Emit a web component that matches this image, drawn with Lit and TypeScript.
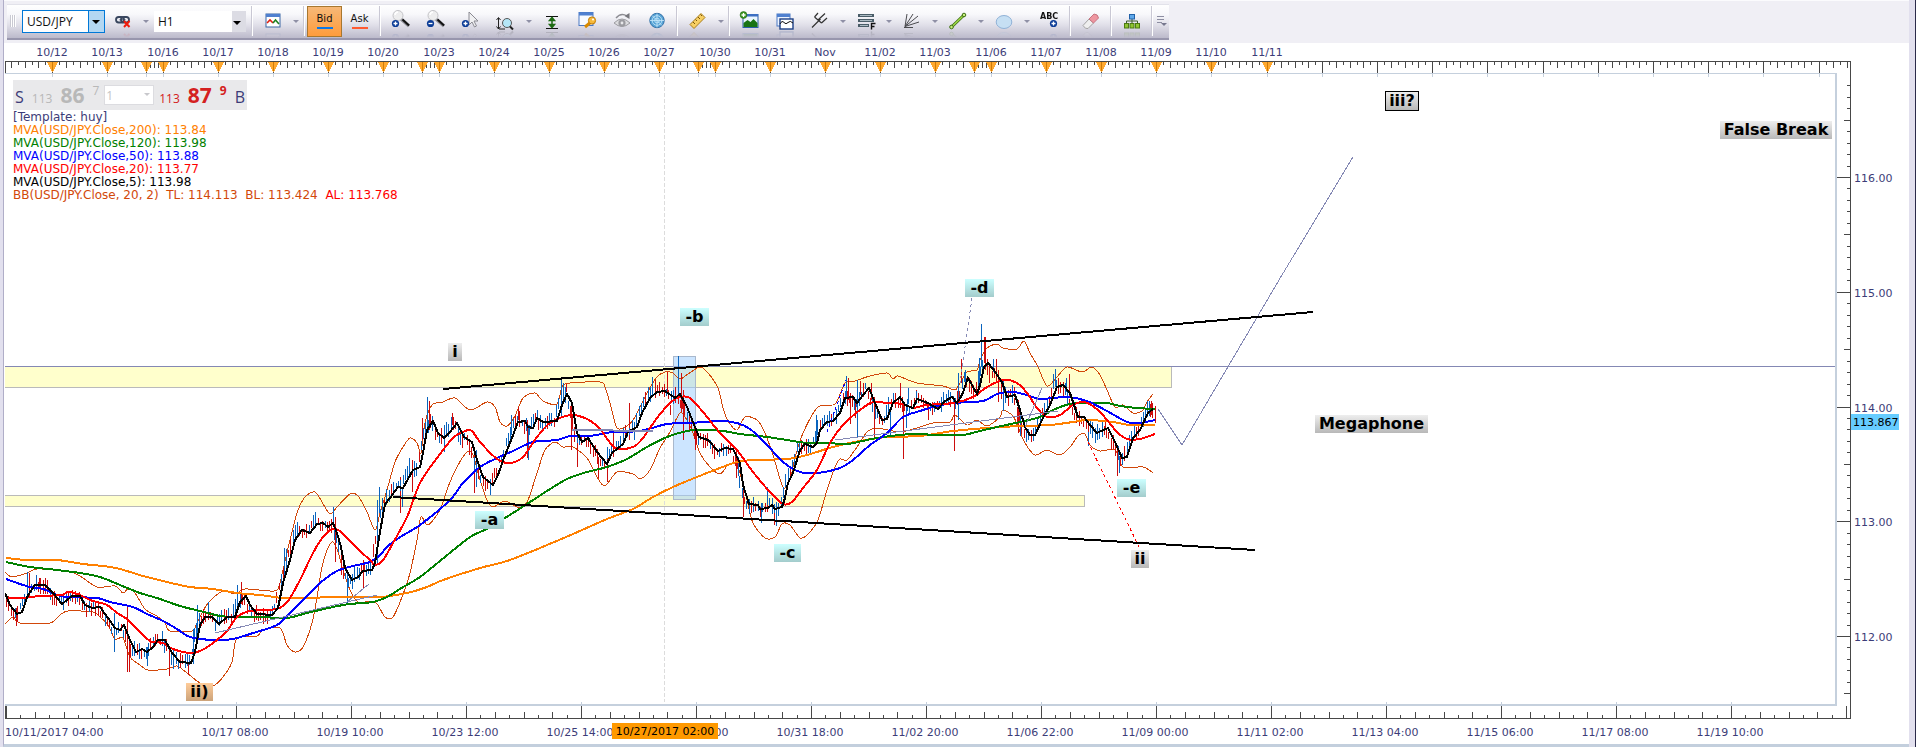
import { LitElement, html, svg, css } from "lit";
import { customElement, property } from "lit/decorators.js";
import { classMap } from "lit/directives/class-map.js";

/* ---------- series data: flat x, y pairs in chart space ---------- */

const MVA200 = [6,558,27,560,57,560,83,564,103,566,120,569,143,576,167,582,190,587,213,589,237,593,260,595,283,598,310,598,333,597,380,597,407,593,427,587,443,580,480,568,507,561,540,548,573,534,607,519,633,509,653,497,673,487,697,477,720,468,737,462,753,460,787,459,807,455,833,447,860,441,887,437,920,436,953,431,987,428,1020,426,1050,425,1073,422,1087,420,1113,422,1130,425,1155,425];
const MVA120 = [6,562,30,567,57,570,80,573,100,577,120,585,140,593,160,599,180,606,200,611,220,616,237,617,260,617,287,618,307,613,333,607,350,604,373,602,387,597,400,589,420,577,440,561,470,537,487,529,505,518,527,504,547,491,567,479,587,472,607,467,627,459,647,447,667,437,687,431,700,430,723,431,740,434,767,437,787,440,807,443,827,443,847,444,867,440,883,437,913,434,937,435,963,435,980,431,997,427,1020,422,1040,417,1053,410,1070,404,1087,403,1107,403,1120,406,1137,408,1155,409];
const MVA50 = [6,579,20,584,30,587,43,589,57,595,67,597,97,598,110,602,133,607,147,614,163,621,177,629,190,637,213,640,233,639,250,634,277,625,290,613,307,596,320,583,337,571,353,566,370,562,380,555,388,546,400,537,420,525,450,500,463,483,480,467,497,458,513,451,533,442,557,440,570,436,590,436,613,432,640,431,667,424,690,423,720,421,737,423,750,429,767,445,783,462,800,472,817,473,840,468,853,460,870,445,887,433,903,417,920,411,937,406,953,403,983,401,997,394,1013,392,1027,395,1040,399,1067,397,1087,401,1107,411,1127,422,1140,423,1155,420];
const MVA20 = [6,598,23,598,40,596,62,595,68,592,80,595,90,600,107,605,117,613,127,619,137,629,150,641,163,643,173,649,190,653,200,651,213,643,227,631,237,617,250,611,277,609,288,601,300,580,313,553,323,537,333,529,340,531,347,538,360,551,370,560,375,565,383,560,393,543,407,517,420,483,437,458,453,438,465,431,472,431,480,442,497,459,510,463,523,457,537,437,550,423,570,415,587,419,600,429,615,448,633,447,643,438,657,418,670,403,680,397,690,398,703,412,720,433,737,450,753,472,770,492,783,504,792,502,803,488,817,470,830,443,843,425,860,410,873,402,887,403,903,404,913,408,927,405,953,403,973,397,987,387,1003,380,1017,383,1027,393,1037,408,1047,417,1060,415,1073,405,1085,402,1100,412,1117,432,1127,439,1140,439,1155,434];
const MVA5 = [5,593,10,605,17,614,22,612,28,595,35,585,45,585,53,593,62,604,72,596,80,596,85,605,92,608,100,607,108,618,115,628,120,630,124,625,130,640,136,652,142,649,147,652,153,647,158,640,165,640,172,653,180,662,191,663,195,652,200,625,205,617,212,617,219,624,227,617,235,617,240,602,246,596,250,605,257,614,272,615,278,608,283,583,290,560,295,540,302,530,310,533,317,524,323,523,328,527,333,523,337,533,341,547,345,568,352,580,358,577,363,571,372,570,375,563,380,532,385,504,390,498,398,487,403,488,413,470,420,467,423,453,427,430,433,421,438,433,444,438,450,432,457,423,464,437,472,442,477,460,483,477,493,485,498,475,505,455,512,438,518,422,525,421,528,427,533,428,537,418,543,422,557,421,562,405,567,394,572,403,577,433,582,442,588,438,597,452,607,464,612,453,623,444,628,432,637,427,642,413,650,398,657,392,665,391,675,398,680,394,687,407,693,422,699,437,708,440,718,451,725,448,733,449,740,463,743,485,749,504,758,505,760,509,768,508,772,505,775,509,782,507,785,498,788,483,793,473,800,450,805,444,813,447,817,443,820,430,827,422,833,421,840,413,845,398,853,397,857,403,863,395,869,388,873,398,882,420,887,419,893,403,900,397,905,405,913,408,917,399,928,403,938,409,945,401,952,397,957,403,962,395,968,378,977,394,980,385,984,367,988,363,993,369,1002,382,1007,397,1015,395,1020,410,1025,427,1030,435,1035,435,1043,418,1050,405,1057,387,1063,385,1070,393,1078,417,1084,417,1090,425,1097,433,1108,428,1115,442,1122,458,1127,457,1133,438,1140,430,1148,413,1153,409];
const BAND_TOP = [5,572,12,577,27,573,37,569,67,571,80,576,97,587,115,586,123,593,128,589,135,593,145,609,157,616,165,623,170,631,192,631,197,623,208,603,223,591,235,594,245,589,270,591,278,589,283,570,290,540,297,513,305,497,315,492,322,502,330,514,337,507,350,494,358,496,367,512,375,530,380,513,387,490,395,462,403,447,410,438,417,443,421,453,425,423,432,405,443,402,455,398,470,410,487,402,495,407,500,422,507,426,515,416,523,398,535,393,543,401,557,404,562,387,570,383,600,382,605,387,610,403,617,428,627,426,635,417,647,393,657,377,665,372,673,373,680,379,688,374,700,367,708,373,718,388,723,408,728,421,737,430,745,417,757,420,765,433,773,455,783,487,790,480,795,458,803,433,818,407,835,404,845,383,855,381,870,376,887,373,893,379,898,376,917,383,943,386,955,390,960,383,967,372,977,370,980,360,987,348,997,344,1003,348,1017,349,1024,341,1030,353,1038,367,1047,386,1057,377,1067,367,1082,372,1092,367,1100,375,1107,390,1115,407,1123,405,1133,413,1142,411,1147,402,1153,394];
const BAND_LOW = [5,624,13,617,20,623,50,623,60,615,68,611,93,612,100,617,108,625,115,639,123,638,130,657,140,665,148,670,167,669,177,666,187,673,200,683,213,686,223,677,232,662,237,638,257,636,263,630,280,628,287,645,295,652,303,647,312,623,317,597,322,567,328,548,333,542,338,552,343,570,350,590,358,602,375,602,385,617,393,617,402,597,410,573,417,540,421,517,428,525,440,510,448,487,457,467,467,452,473,455,480,480,487,500,493,507,505,501,520,508,528,500,537,473,545,450,555,442,563,447,573,447,587,458,597,477,605,486,617,472,633,474,640,479,650,470,660,448,670,432,680,413,687,420,693,433,700,453,710,467,720,474,728,465,736,463,740,473,747,500,753,523,765,538,775,537,782,524,790,525,800,538,808,534,818,520,827,490,835,467,840,459,847,460,857,447,867,432,877,428,900,432,920,427,933,423,950,422,955,415,967,425,977,420,987,426,1000,417,1003,410,1013,416,1018,427,1025,443,1035,455,1047,450,1060,455,1070,447,1078,436,1085,434,1090,445,1100,451,1115,450,1123,467,1143,467,1153,473];

/* long candles: x, high, low, rising (1) or falling (0) */
const LONG_BARS = [
  [16,608,626,0],[27,572,592,1],[29,573,590,0],[36,577,590,1],[39,578,588,0],[127,607,672,0],[129,640,672,0],[114,613,652,1],[147,647,666,1],[169,647,676,0],[173,650,669,1],[188,663,675,0],[193,629,664,1],[197,605,640,1],[208,602,614,1],[241,582,604,0],[237,585,607,1],[284,548,580,1],[286,549,570,1],[315,512,527,1],[333,507,523,1],[335,517,562,0],[341,546,575,0],[347,570,603,1],[363,560,588,0],[377,500,563,1],[379,487,513,1],[400,477,513,0],[402,487,507,1],[409,458,476,1],[412,463,492,0],[427,397,430,1],[429,401,430,0],[422,418,440,0],[452,413,425,0],[444,425,452,1],[474,450,493,0],[476,450,487,1],[511,415,435,1],[518,407,420,0],[527,420,458,0],[528,425,460,1],[537,410,420,1],[561,380,417,1],[563,383,400,1],[566,384,392,0],[571,403,450,0],[577,440,467,0],[598,457,478,0],[607,457,482,0],[613,431,452,0],[629,403,440,0],[634,422,440,1],[652,377,397,1],[655,380,392,0],[667,372,393,0],[670,405,415,0],[678,356,397,1],[681,373,412,0],[683,390,440,0],[695,430,450,0],[736,450,478,0],[743,483,517,0],[738,457,476,1],[767,487,505,1],[761,503,523,1],[776,503,526,1],[774,508,525,0],[816,415,443,1],[846,376,397,1],[848,378,400,0],[850,393,424,0],[855,402,418,0],[857,380,437,1],[860,381,395,0],[871,383,400,0],[874,397,438,0],[890,410,435,1],[900,383,397,0],[903,403,459,0],[906,406,428,1],[908,388,404,1],[916,390,402,0],[928,405,420,0],[943,392,404,1],[950,392,400,1],[954,402,451,0],[958,373,420,1],[961,359,383,0],[965,370,384,1],[981,324,367,1],[984,337,363,0],[985,337,363,0],[979,358,386,1],[989,366,383,0],[993,359,372,1],[996,359,378,0],[998,370,402,0],[1003,380,411,1],[1012,385,395,1],[1014,387,397,0],[1018,400,433,0],[1020,410,436,1],[1053,374,388,1],[1055,369,387,1],[1069,374,397,0],[1066,378,392,1],[1088,432,446,1],[1117,450,476,0],[1119,456,473,1],[1105,419,430,0],[1149,401,416,1],[1151,401,415,0],[1155,406,423,0],
];

const MAJOR_LINES = [
  { pts: MVA200, cls: "ma orange" },
  { pts: MVA120, cls: "ma green" },
  { pts: MVA50, cls: "ma blue" },
  { pts: MVA20, cls: "ma red" },
  { pts: MVA5, cls: "ma black" },
];

const toPoints = (a: number[]) => {
  let s = "";
  for (let i = 0; i < a.length; i += 2) s += `${a[i]},${a[i + 1]} `;
  return s;
};

/* Catmull-Rom smoothing so sampled curves bend between their points */
const toPath = (a: number[]) => {
  const n = a.length / 2;
  const X = (i: number) => a[2 * Math.max(0, Math.min(n - 1, i))];
  const Y = (i: number) => a[2 * Math.max(0, Math.min(n - 1, i)) + 1];
  let d = `M${X(0)} ${Y(0)}`;
  for (let i = 0; i < n - 1; i++) {
    const c1x = X(i) + (X(i + 1) - X(i - 1)) / 7;
    const c1y = Y(i) + (Y(i + 1) - Y(i - 1)) / 7;
    const c2x = X(i + 1) - (X(i + 2) - X(i)) / 7;
    const c2y = Y(i + 1) - (Y(i + 2) - Y(i)) / 7;
    d += `C${c1x.toFixed(1)} ${c1y.toFixed(1)} ${c2x.toFixed(1)} ${c2y.toFixed(1)} ${X(i + 1)} ${Y(i + 1)}`;
  }
  return d;
};

const valueAt = (a: number[], x: number) => {
  for (let i = 2; i < a.length; i += 2) {
    if (x <= a[i]) {
      const t = (x - a[i - 2]) / (a[i] - a[i - 2]);
      return a[i - 1] + t * (a[i + 1] - a[i - 1]);
    }
  }
  return a[a.length - 1];
};

/* hourly bars around the fast average, as one path per direction */
const buildBars = () => {
  let seed = 7919;
  const rnd = () => (seed = (seed * 16807) % 2147483647) / 2147483647;
  const paths = ["", ""];
  for (let k = 0; k < 501; k++) {
    const x = Math.round(6 + k * 2.292) + 0.5;
    const now = valueAt(MVA5, x + 3);
    const next = valueAt(MVA5, x + 6);
    const mid = now + (rnd() - 0.5) * 7;
    const up = next < now - 0.8 ? rnd() < 0.8 : next > now + 0.8 ? rnd() < 0.2 : rnd() < 0.5;
    const half = 3 + rnd() * 5;
    paths[up ? 1 : 0] += `M${x} ${Math.round(mid - half)}V${Math.round(mid + half)}`;
  }
  for (const [x, hi, lo, up] of LONG_BARS) paths[up] += `M${x + 0.5} ${hi}V${lo}`;
  return paths;
};
const [FALLING, RISING] = buildBars();

/* ---------- axes ---------- */

const DAYS: [string, number][] = [
  ["10/12", 52], ["10/13", 107], ["10/16", 163], ["10/17", 218], ["10/18", 273], ["10/19", 328], ["10/20", 383],
  ["10/23", 439], ["10/24", 494], ["10/25", 549], ["10/26", 604], ["10/27", 659], ["10/30", 715], ["10/31", 770],
  ["Nov", 825], ["11/02", 880], ["11/03", 935], ["11/06", 991], ["11/07", 1046], ["11/08", 1101], ["11/09", 1156],
  ["11/10", 1211], ["11/11", 1267],
];
const WEEK_OPENS = [146, 422, 698, 974];
const FUTURE_DAYS = [1322, 1377, 1432, 1487, 1543, 1598, 1653, 1708, 1763, 1819];

const dayTicks = () => {
  const stops = [-3, ...DAYS.map((d) => d[1]), ...FUTURE_DAYS, 1874];
  let d = "";
  for (let i = 0; i < stops.length - 1; i++) {
    const weekOpen = WEEK_OPENS.find((w) => w > stops[i] && w < stops[i + 1]);
    const end = weekOpen ?? stops[i + 1];
    for (let k = 1; k < 8; k++) {
      const x = Math.round(stops[i] + k * 6.9);
      if (x < 8 || x > end - 3 || x > 1848) continue;
      d += `M${x + 0.5} 62V${k % 2 ? 65 : 68}`;
    }
    if (weekOpen) for (let k = 1; k < 4; k++) d += `M${weekOpen + k * 4 + 0.5} 62V68`;
  }
  for (const x of FUTURE_DAYS) d += `M${x + 0.5} 62V74`;
  for (const x of [...WEEK_OPENS, ...DAYS.map((q) => q[1])]) d += `M${x + 0.5} 71V74`;
  return d;
};

const TIMES = ["10/17 08:00", "10/19 10:00", "10/23 12:00", "10/25 14:00", "10/27 16:00", "10/31 18:00", "11/02 20:00", "11/06 22:00", "11/09 00:00", "11/11 02:00", "11/13 04:00", "11/15 06:00", "11/17 08:00", "11/19 10:00"];

const timeTicks = () => {
  let d = "";
  for (let i = 1; i <= 128; i++) {
    const x = Math.round(6 + i * 14.375) + 0.5;
    d += `M${x} 718V${i % 8 === 0 ? 706 : i % 2 ? 715 : 712}`;
  }
  return d;
};

const priceTicks = () => {
  let d = "";
  for (let k = -8; k <= 45; k++) {
    const y = Math.round(177 + k * 11.475) + 0.5;
    d += `M1851 ${y}H${k % 10 === 0 ? 1837 : k % 5 === 0 ? 1844 : 1847}`;
  }
  return d;
};

/* ---------- notes on the canvas ---------- */

interface Note { text: string; x: number; y: number; w: number; tone: string; }
const NOTES: Note[] = [
  { text: "iii?", x: 1385, y: 91, w: 34, tone: "grey boxed" },
  { text: "False Break", x: 1720, y: 121, w: 112, tone: "grey" },
  { text: "Megaphone", x: 1315, y: 415, w: 113, tone: "grey" },
  { text: "i", x: 448, y: 343, w: 14, tone: "grey" },
  { text: "ii", x: 1131, y: 550, w: 18, tone: "grey" },
  { text: "ii)", x: 186, y: 683, w: 27, tone: "tan" },
  { text: "-a", x: 475, y: 511, w: 29, tone: "aqua" },
  { text: "-b", x: 680, y: 308, w: 29, tone: "aqua" },
  { text: "-c", x: 774, y: 544, w: 27, tone: "aqua" },
  { text: "-d", x: 965, y: 279, w: 29, tone: "aqua" },
  { text: "-e", x: 1117, y: 479, w: 29, tone: "aqua" },
];

const LEGEND = [
  ["", "[Template: huy]"],
  ["orange", "MVA(USD/JPY.Close,200): 113.84"],
  ["green", "MVA(USD/JPY.Close,120): 113.98"],
  ["blue", "MVA(USD/JPY.Close,50): 113.88"],
  ["red", "MVA(USD/JPY.Close,20): 113.77"],
  ["black", "MVA(USD/JPY.Close,5): 113.98"],
];

/* ---------- toolbar icons, 24 x 24 ---------- */

const plusBall = svg`<circle cx="6.500" cy="14.500" r="3.600" fill="#0b3c96"/><path d="M4.500 14.500h4M6.500 12.500v4" stroke="#fff" stroke-width="1.300"/>`;
const magnifier = svg`<path d="M12 10l8 7" stroke="#8f8f98" stroke-width="3.500"/><path d="M13.500 10.500l6.500 6" stroke="#111" stroke-width="2"/><circle cx="9" cy="6.500" r="5" fill="#ededee" stroke="#c2c2c6"/><path d="M6 6a3.200 3.200 0 0 1 3-3" stroke="#fff" stroke-width="1.500" fill="none"/>`;

const ICONS: Record<string, unknown> = {
  link: svg`<g fill="none" stroke="#39465e" stroke-width="1.800"><rect x="5" y="8" width="8" height="5.500" rx="2.700"/><rect x="10" y="8" width="8" height="5.500" rx="2.700"/></g><path d="M8.500 10.800h6" stroke="#39465e"/><path d="M13 12l5.500 6M18.500 12L13 18" stroke="#f01c0c" stroke-width="2"/>`,
  study: svg`<rect x="5" y="5" width="14" height="13" fill="#fff" stroke="#3b66a4"/><rect x="5" y="5" width="14" height="3" fill="#4f80d0"/><path d="M6 14l3-3 3 3" stroke="#e02010" stroke-width="1.600" fill="none"/><path d="M12 14l2.500-3 3.500 4" stroke="#208020" stroke-width="1.600" fill="none"/>`,
  zoomin: svg`${magnifier}${plusBall}`,
  zoomout: svg`${magnifier}<circle cx="6.500" cy="14.500" r="3.600" fill="#0b3c96"/><path d="M4.500 14.500h4" stroke="#fff" stroke-width="1.300"/>`,
  pointer: svg`<path d="M10 3v13l3-3 2.500 5 2-1-2.500-5h4z" fill="#f0f0f2" stroke="#8a8a92"/>${plusBall}`,
  measure: svg`<path d="M4.500 9v11M2.500 11l2-2.500 2 2.500M2.500 17.500l2 2.500 2-2.500M5 20h6" stroke="#222" fill="none"/><circle cx="13" cy="14" r="4.500" fill="#b5e6f7" stroke="#555"/><path d="M16 17.500l3 3" stroke="#222" stroke-width="2"/>`,
  fit: svg`<path d="M6 7.500h12M6 19.500h12" stroke="#111"/><path d="M12 8v11M9.500 11.500L12 8.500l2.500 3zM9.500 15.500L12 18.500l2.500-3z" stroke="#1d6a12" fill="#4bb52f" stroke-width="1.500"/>`,
  key: svg`<rect x="4" y="3.500" width="14" height="13" fill="#f7faff" stroke="#4a78c4"/><rect x="4" y="3.500" width="14" height="3" fill="#4f80d0"/><path d="M10 18l6-5" stroke="#d98a00" stroke-width="3"/><circle cx="17" cy="11.500" r="3.600" fill="#f6b93a" stroke="#c27c05"/><circle cx="18" cy="10.500" r="1" fill="#fff"/>`,
  eye: svg`<path d="M4 14q8-8 16 0q-8 7-16 0z" fill="#dcdcdf" stroke="#9b9ba0"/><circle cx="12" cy="14" r="3.600" fill="#9b9ba0"/><circle cx="12" cy="14" r="1.400" fill="#e8e8ea"/><path d="M6 9q5-6 11-2" stroke="#8d8d93" fill="none" stroke-width="1.400"/><path d="M19.500 4v6l-5-3z" fill="#77777d"/>`,
  globe: svg`<circle cx="12" cy="11.500" r="7.200" fill="#58a4d6" stroke="#2f6ea6"/><g fill="none" stroke="#c8e8fa" stroke-width=".8"><circle cx="12" cy="11.500" r="2.400"/><circle cx="12" cy="11.500" r="4.800"/><path d="M12 4.500v14M5 11.500h14M7 6.500l10 10"/></g>`,
  ruler: svg`<path d="M4 15.500L15 4.500l4 4L8 19.500z" fill="#f7cf63" stroke="#a77b18"/><path d="M7 13l2 2M9.500 10.500l1.500 1.500M12 8l2 2M14.500 5.500l1.500 1.500" stroke="#7a5608"/>`,
  picture: svg`<rect x="5" y="5.500" width="15" height="13" fill="#eaf5ff" stroke="#2b5fa8"/><path d="M5.500 18v-4l4-3 3 2 3-3 4 4v4z" fill="#197414"/><rect x="5" y="5" width="15" height="2.500" fill="#3d6fc2"/><circle cx="5.500" cy="6" r="3.400" fill="#3f9a25" stroke="#1d6110" stroke-width=".6"/><path d="M3.500 6h4M5.500 4v4" stroke="#fff" stroke-width="1.300"/>`,
  windows: svg`<rect x="4" y="5" width="13" height="12" fill="#eef4ff" stroke="#4a78c4"/><rect x="4" y="5" width="13" height="3" fill="#4f80d0"/><rect x="7" y="10" width="13" height="10" fill="#fff" stroke="#1c3f86" stroke-width="1.400"/><path d="M7 15q2-4 4-1.500t4 0 5 .5" stroke="#111" fill="none"/>`,
  fork: svg`<path d="M4 18.500L12.500 10M6.500 8l7 6M6.500 8L10 4M10 11L17 4.500M13.500 14L19 9" stroke="#333" fill="none" stroke-width="1.200"/>`,
  levels: svg`<g stroke="#4a5d68" stroke-width="3"><path d="M4 6.500h16M4 11.500h16M4 16.500h11"/></g><path d="M6 6.500h12M6 11.500h12M6 16.500h8" stroke="#b6c4cc" stroke-width=".9"/><path d="M17.500 20.500v-6h4M17.500 17.500h3" stroke="#111" stroke-width="1.400" fill="none"/>`,
  fan: svg`<path d="M5 17.500L7 5M5 17.500L13 5M5 17.500L18 7M5 17.500L19 13M4 18.500h9" stroke="#4a4a4e" fill="none"/>`,
  trend: svg`<path d="M5.500 18L18 6" stroke="#3c6e12" stroke-width="3"/><path d="M5.500 18L18 6" stroke="#a3dd4a" stroke-width="1.400"/><circle cx="5.500" cy="18" r="1.800" fill="#c9ef7e" stroke="#3c6e12"/><circle cx="18" cy="6" r="1.800" fill="#c9ef7e" stroke="#3c6e12"/>`,
  oval: svg`<ellipse cx="12" cy="13" rx="7.800" ry="6.500" fill="#c6dff3" stroke="#8fb1d6"/>`,
  label: svg`<circle cx="15.500" cy="14.500" r="3.600" fill="#0b3c96"/><path d="M13.500 14.500h4M15.500 12.500v4" stroke="#fff" stroke-width="1.300"/><text x="2" y="10" font-family="DejaVu Sans" font-size="8" font-weight="bold" fill="#111">ABC</text>`,
  eraser: svg`<path d="M4 16.500L10 10l4.500 4L9 19.500q-2.500 1-5-3z" fill="#efefef" stroke="#a2a2a2"/><path d="M10 10l5-5q4 0 4.500 4l-5 5z" fill="#ee96a0" stroke="#c67480"/>`,
  tree: svg`<path d="M12 9v3M6.500 15v-3h11v3M12 12v3" stroke="#3f5c2c" fill="none"/><rect x="9.500" y="5.500" width="5" height="4.500" fill="#5fa8ea" stroke="#2262a8"/><g fill="#8fc531" stroke="#4c7a10"><rect x="4.500" y="14.500" width="4" height="4.500"/><rect x="10" y="14.500" width="4" height="4.500"/><rect x="15.500" y="14.500" width="4" height="4.500"/></g>`,
};

type Item = [kind: string, name?: string, title?: string];
const TOOLS: Item[] = [
  ["icon", "zoomin", "Zoom in"], ["icon", "zoomout", "Zoom out"], ["icon", "pointer", "Pointer"], ["icon", "measure", "Measure"], ["caret"],
  ["icon", "fit", "Fit vertically"], ["icon", "key", "Properties"], ["icon", "eye", "Show or hide"], ["icon", "globe", "Radar"], ["sep"],
  ["icon", "ruler", "Ruler"], ["caret"], ["sep"],
  ["icon", "picture", "Add picture"], ["icon", "windows", "Arrange windows"], ["icon", "fork", "Pitchfork"], ["caret"],
  ["icon", "levels", "Fibonacci levels"], ["caret"], ["icon", "fan", "Fan"], ["caret"], ["icon", "trend", "Trend line"], ["caret"],
  ["icon", "oval", "Ellipse"], ["caret"], ["icon", "label", "Text label"], ["sep"],
  ["icon", "eraser", "Erase"], ["sep"], ["icon", "tree", "Object tree"], ["sep"],
];

@customElement("chart-toolbar")
class ChartToolbar extends LitElement {
  static styles = css`
    :host { display: block; background: #f0eff5; border-top: 1px solid #fbfbfd; padding: 3px 0 3px 3px; font-family: "Open Sans", sans-serif; font-size: 12px; }
    .bar { display: flex; align-items: center; width: max-content; height: 36px; box-sizing: border-box; padding-left: 3px; border-bottom: 2px solid #9896ad; box-shadow: inset 0 1px #e2e2ea; background: linear-gradient(#fff 0%, #f8f8fb 30%, #e2e1ea 60%, #bcbacb 100%); }
    .grip { width: 6px; height: 12px; margin-right: 6px; background: repeating-linear-gradient(90deg, #c9c9d2 0 1px, #fff 1px 2px); }
    .combo { position: relative; display: flex; align-items: center; }
    .combo::after { content: ""; position: absolute; right: 5px; top: 10px; border: 4px solid transparent; border-top-color: #000; border-bottom: 0; pointer-events: none; }
    select { appearance: none; box-sizing: border-box; margin: 0; padding: 0 4px; border: 0; border-radius: 0; font: inherit; color: #111; }
    .symbol select { width: 83px; height: 23px; border: 1px solid #0078d7; background: linear-gradient(90deg, #fff 65px, #0078d7 65px 66px, #b3d7f2 66px); }
    .period { margin: 0 3px; }
    .period select { width: 92px; height: 21px; background: linear-gradient(90deg, #fff 78px, #dcdce4 78px); }
    button { display: flex; align-items: center; justify-content: center; box-sizing: border-box; margin: 0; padding: 0; border: 0; background: none; font: inherit; color: #111; }
    .icon { width: 35px; height: 34px; }
    .icon svg { width: 24px; height: 24px; -webkit-box-reflect: below -5px linear-gradient(transparent 60%, rgba(0, 0, 0, 0.25)); }
    .caret { width: 11px; height: 34px; }
    .caret::after { content: ""; border: 3px solid transparent; border-top: 3px solid #8f90a6; border-bottom: 0; }
    .sep { width: 6px; height: 30px; background: linear-gradient(90deg, transparent 2px, #c9c8d4 2px 3px, #fff 3px 4px, transparent 4px); }
    .side { flex-direction: column; gap: 2px; width: 35px; height: 31px; font-family: "DejaVu Sans", sans-serif; font-size: 10px; line-height: 12px; }
    .side::after { content: ""; width: 16px; height: 2px; background: #ff5a30; }
    .side.on { border: 1px solid #a8772f; background: linear-gradient(#f6b877, #ff9c3c); }
    .side.on::after { background: #0a78e8; }
    .more { width: 14px; height: 34px; }
  `;

  private item([kind, name, title]: Item) {
    if (kind === "sep") return html`<span class="sep"></span>`;
    if (kind === "caret") return html`<button class="caret" aria-label="More options"></button>`;
    return html`<button class="icon" aria-label=${title!}><svg viewBox="0 0 24 24" fill="none">${ICONS[name!]}</svg></button>`;
  }

  private side(text: string, on: boolean) {
    return html`<button class=${classMap({ side: true, on })} aria-pressed=${on}>${text}</button>`;
  }

  render() {
    return html`
      <div class="bar" role="toolbar">
        <span class="grip"></span>
        <label class="combo symbol"><select aria-label="Symbol"><option>USD/JPY</option></select></label>
        ${this.item(["icon", "link", "Unlink"])} ${this.item(["caret"])}
        <label class="combo period"><select aria-label="Period"><option>H1</option></select></label>
        ${this.item(["sep"])} ${this.item(["icon", "study", "Indicators"])} ${this.item(["caret"])} ${this.item(["sep"])}
        ${this.side("Bid", true)} ${this.side("Ask", false)} ${this.item(["sep"])}
        ${TOOLS.map((t) => this.item(t))}
        <button class="more" aria-label="Toolbar overflow">
          <svg width="10" height="12" viewBox="0 0 10 12"><path d="M0 1.500h7M0 4.500h7M0 7.500h5" stroke="#8d8ea2"/><path d="M4 8h6l-3 3z" fill="#77788e"/></svg>
        </button>
      </div>
    `;
  }
}

@customElement("quote-panel")
class QuotePanel extends LitElement {
  static styles = css`
    :host { display: flex; align-items: stretch; justify-content: space-between; box-sizing: border-box; width: 234px; height: 30px; padding: 0 2px; background: #e9e9eb; font-family: "Open Sans", sans-serif; color: #3c3c78; }
    button { display: flex; align-items: baseline; gap: 8px; padding: 0; border: 0; background: none; font: inherit; font-size: 16px; line-height: 30px; color: inherit; }
    .price { display: flex; align-items: baseline; gap: 8px; color: #b8b8b8; }
    .buy .price { color: #d42020; }
    .small { font-size: 12px; }
    .big { font-size: 21px; font-weight: bold; }
    .pip { align-self: flex-start; font-size: 12px; line-height: 21px; }
    .buy .pip { font-weight: bold; }
    .lots { position: relative; align-self: center; display: flex; }
    .lots::after { content: ""; position: absolute; right: 4px; top: 8px; border: 3px solid transparent; border-top-color: #c8c8cc; border-bottom: 0; }
    select { appearance: none; width: 50px; height: 20px; box-sizing: border-box; padding: 0 1px; border: 1px solid #dcdce0; border-radius: 0; background: #fff; font-family: inherit; font-size: 12px; color: #c4c4c4; }
  `;

  render() {
    return html`
      <button class="sell">S<span class="price"><span class="small">113</span><span class="big">86</span><span class="pip">7</span></span></button>
      <label class="lots"><select aria-label="Amount"><option>1</option></select></label>
      <button class="buy"><span class="price"><span class="small">113</span><span class="big">87</span><span class="pip">9</span></span>B</button>
    `;
  }
}

@customElement("price-chart")
class PriceChart extends LitElement {
  @property({ type: String }) last = "113.867";

  static styles = css`
    :host { display: grid; grid-template-columns: minmax(0, 1fr) 14px 58px; grid-template-rows: 18px 13px minmax(400px, 1fr) 13px 25px; padding-left: 1px; background: #fff; font-family: "DejaVu Sans", sans-serif; font-size: 11px; color: #3c3c78; }
    svg { display: block; overflow: hidden; shape-rendering: crispEdges; }
    text { fill: #3c3c78; font-size: 11px; }
    .frame { grid-area: 2 / 1 / 5 / 3; border: solid #484848; border-width: 1px 1px 1px 0; }
    .top { grid-area: 1 / 1 / 3 / 3; width: 100%; height: 31px; }
    .bottom { grid-area: 4 / 1 / 6 / 4; width: 100%; height: 38px; }
    .side { grid-area: 1 / 2 / 6 / 4; width: 100%; height: 100%; }
    .plot { grid-area: 3 / 1 / 4 / 2; position: relative; overflow: hidden; border: solid #c5d0dd; border-width: 0 2px 2px 0; box-shadow: 0 -1px #c5d0dd; }
    .canvas { position: absolute; inset: 0; width: 100%; height: 100%; }
    .tick { stroke: #484848; fill: none; }
    .notch { stroke: #c5d0dd; fill: none; }
    .day { fill: #ffa930; }
    .stem { stroke: #d07c08; }
    .zone { fill: #ffffcc; stroke: #bababa; }
    .focus { fill: #99ccff; fill-opacity: 0.5; stroke: #a9b8cc; }
    .cursor { stroke: #dcdcdc; stroke-dasharray: 4 2; }
    .thin { stroke: #8488b4; fill: none; }
    .dash { stroke-dasharray: 3 3; }
    .alert { stroke: #f00; }
    .early { stroke: #00f; }
    .wave { stroke: #000; stroke-width: 2; }
    .up { stroke: #0a64be; }
    .down { stroke: #cc0c0c; }
    .band { stroke: #d2480a; fill: none; }
    .ma { stroke-width: 2; fill: none; }
    .ma.orange { stroke: #ff8000; }
    .ma.green { stroke: #008000; }
    .ma.blue { stroke: #00f; }
    .ma.red { stroke: #f00; }
    .ma.black { stroke: #000; }
    .overlay { position: relative; display: flex; flex-direction: column; align-items: flex-start; padding: 6px 0 0 8px; }
    .legend { margin: 1px 0 0; padding: 0; list-style: none; font-size: 12px; line-height: 13px; }
    .legend li { white-space: pre; }
    .legend .orange { color: #ff8000; }
    .legend .green { color: #008000; }
    .legend .blue { color: #00f; }
    .legend .red { color: #f00; }
    .legend .black { color: #000; }
    .legend .rust { color: #d2480a; }
    .note { position: absolute; height: 18px; line-height: 18px; font-size: 16px; font-weight: bold; text-align: center; white-space: nowrap; color: #000; }
    .grey { background: linear-gradient(#eee, #b8b8b8); }
    .aqua { background: linear-gradient(#ccffff, #a3cccc); }
    .tan { background: linear-gradient(#ffcc99, #cca37a); }
    .boxed { border: 1px solid #000; box-sizing: border-box; height: 20px; }
    .tag { fill: #6cf; }
    .when { fill: #ff9900; }
    .ink { fill: #000; }
  `;

  private topAxis() {
    return svg`
      <g transform="translate(-5 -43)">
        <path class="tick" d="M5.500 61V74M11.500 62V68 ${dayTicks()}"/>
        ${[...WEEK_OPENS, ...DAYS.map((d) => d[1])].map((x) => svg`
          <polygon class="day" points="${x - 5},62 ${x + 6},62 ${x + 1},72 ${x},72"/>
          <path class="stem" d="M${x + 0.5} 62V71"/>`)}
        ${DAYS.map(([t, x]) => svg`<text x=${x} y="56" text-anchor="middle">${t}</text>`)}
      </g>`;
  }

  private bottomAxis() {
    return svg`
      <g transform="translate(-5 -706)">
        <rect x="5" y="706" width="2" height="13" fill="#484848"/>
        <path class="tick" d=${timeTicks()}/>
        <text x="5" y="736">10/11/2017 04:00</text>
        ${TIMES.map((t, i) => svg`<text x=${235 + i * 115} y="736" text-anchor="middle">${t}</text>`)}
        <rect class="when" x="612" y="723" width="106" height="16"/>
        <text class="ink" x="665" y="735" text-anchor="middle">10/27/2017 02:00</text>
      </g>`;
  }

  private sideAxis() {
    return svg`
      <g transform="translate(-1837 -43)">
        <path class="tick" d=${priceTicks()}/>
        ${["116.00", "115.00", "114.00", "113.00", "112.00"].map((t, i) => svg`<text x="1854" y=${Math.round(182 + i * 114.75)}>${t}</text>`)}
        <rect class="tag" x="1851" y="414" width="48" height="16"/>
        <text class="ink" x="1853" y="426">${this.last}</text>
      </g>`;
  }

  private canvas() {
    const notches = [...WEEK_OPENS, ...DAYS.map((d) => d[1]), ...FUTURE_DAYS];
    return svg`
      <g transform="translate(-5 -74)">
        <path class="notch" d=${notches.map((x) => `M${x + 0.5} 74V77`).join("") + TIMES.map((_, i) => `M${236.5 + i * 115} 702V706`).join("") + "M121.5 702V706"}/>
        <rect class="zone" x="3.500" y="366.500" width="1168" height="21"/>
        <rect class="zone" x="3.500" y="495.500" width="1081" height="11"/>
        <path class="thin" d="M5 366.500H1837"/>
        <path class="cursor" d="M664.500 75V702"/>
        <rect class="focus" x="673.500" y="356.500" width="22" height="143"/>
        <path class="band" d=${toPath(BAND_TOP)}/>
        <path class="band" d=${toPath(BAND_LOW)}/>
        <path class="down" d=${FALLING}/>
        <path class="up" d=${RISING}/>
        ${MAJOR_LINES.map((l) => l.cls.includes("black")
          ? svg`<polyline class=${l.cls} points=${toPoints(l.pts)}/>`
          : svg`<path class=${l.cls} d=${toPath(l.pts)}/>`)}
        <path class="thin" d="M215 633L377 595M347 602L369 584M835 440L1058 411M1025 427L1042 388M1158 409L1182 445L1279 280L1353 157"/>
        <path class="thin" d="M572 430L653 431" stroke-width="2"/>
        <path class="thin dash" d="M972 298L960 383"/>
        <path class="thin dash early" d="M827 432L846 380"/>
        <path class="thin dash alert" d="M1088 442L1141 551"/>
        <path class="wave" d="M443 389L1313 312M393 497L1255 550"/>
      </g>`;
  }

  render() {
    return html`
      <div class="frame"></div>
      <svg class="top">${this.topAxis()}</svg>
      <div class="plot">
        <svg class="canvas">${this.canvas()}</svg>
        ${NOTES.map((n) => html`<div class="note ${n.tone}" style="left:${n.x - 5}px;top:${n.y - 74}px;width:${n.w}px">${n.text}</div>`)}
        <div class="overlay">
          <quote-panel></quote-panel>
          <ul class="legend">
            ${LEGEND.map(([c, t]) => html`<li class=${c}>${t}</li>`)}
            <li class="rust">BB(USD/JPY.Close, 20, 2)  TL: 114.113  BL: 113.424  <span class="red">AL: 113.768</span></li>
          </ul>
        </div>
      </div>
      <svg class="bottom">${this.bottomAxis()}</svg>
      <svg class="side">${this.sideAxis()}</svg>
    `;
  }
}

@customElement("app-root")
class AppRoot extends LitElement {
  static styles = css`
    :host { display: flex; flex-direction: column; box-sizing: border-box; min-height: 100vh; border: solid; border-width: 0 1px 0 3px; border-color: #1c1c38 #2a2a4a #c3cfdd #e2e0ee; background: #e2e0ee; }
    .sheet { flex: 1; display: flex; flex-direction: column; margin-right: 6px; border-left: 1px solid #b0aec8; border-bottom: 3px solid #c3cfdd; }
    price-chart { flex: 1; }
  `;

  render() {
    return html`<div class="sheet"><chart-toolbar></chart-toolbar><price-chart></price-chart></div>`;
  }
}
